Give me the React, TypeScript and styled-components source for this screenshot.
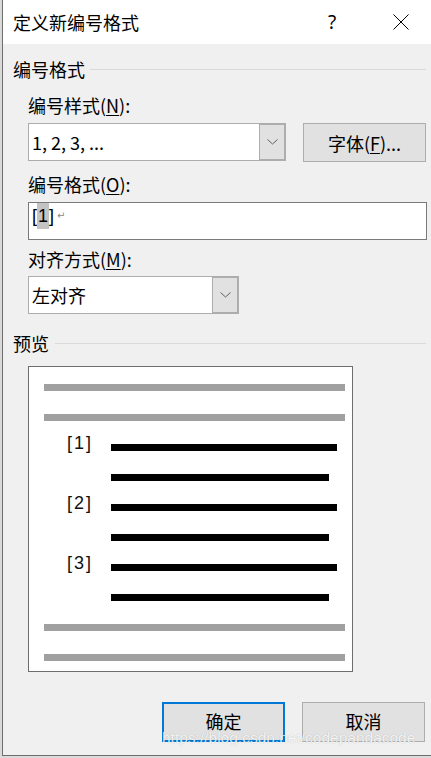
import React from 'react';
import styled, { createGlobalStyle } from 'styled-components';

const GlobalStyle = createGlobalStyle`
  html, body {
    margin: 0;
    padding: 0;
    background: #dadada;
  }
  * {
    box-sizing: border-box;
  }
`;

const Window = styled.div`
  position: relative;
  margin-left: 2px;
  width: 429px;
  height: 756px;
  display: flex;
  flex-direction: column;
  background: #f0f0f0;
  border-left: 1px solid #6e6e6e;
  border-bottom: 1px solid #6e6e6e;
  font-family: 'Noto Sans CJK SC', 'Noto Sans', sans-serif;
  font-size: 18px;
  color: #000;
`;

const TitleBar = styled.div`
  height: 44px;
  flex-shrink: 0;
  display: flex;
  align-items: center;
  background: #fff;
  padding-left: 10px;
`;

const Title = styled.div`
  flex: 1;
  line-height: 24px;
  font-size: 18px;
`;

const CaptionButton = styled.div<{ $gap?: number }>`
  width: 60px;
  height: 44px;
  display: flex;
  align-items: center;
  justify-content: center;
  margin-right: ${({ $gap }) => $gap ?? 0}px;
  font-size: 19px;
  font-family: 'Noto Sans', sans-serif;
`;

const Body = styled.div`
  flex: 1;
  display: flex;
  flex-direction: column;
  padding: 0 2px 0 10px;
`;

const GroupHeader = styled.div<{ $top: number; $lineGap: number }>`
  display: flex;
  align-items: center;
  height: 24px;
  margin-top: ${({ $top }) => $top}px;
  margin-right: 3px;
  line-height: 24px;

  &::after {
    content: '';
    flex: 1;
    height: 1px;
    margin-left: ${({ $lineGap }) => $lineGap}px;
    background: #d9d9d9;
  }
`;

const Indent = styled.div`
  display: flex;
  flex-direction: column;
  padding-left: 15px;
`;

const FieldLabel = styled.div<{ $top: number }>`
  margin-top: ${({ $top }) => $top}px;
  line-height: 24px;
  height: 24px;
`;

const Mnemonic = styled.span`
  text-decoration: underline;
  text-underline-offset: 2px;
`;

const Row = styled.div<{ $top: number }>`
  display: flex;
  align-items: flex-start;
  margin-top: ${({ $top }) => $top}px;
`;

const Combo = styled.div<{ $width: number; $top?: number }>`
  width: ${({ $width }) => $width}px;
  height: 38px;
  margin-top: ${({ $top }) => $top ?? 0}px;
  display: flex;
  background: #fff;
  border: 1px solid #adadad;
`;

const ComboValue = styled.div`
  flex: 1;
  display: flex;
  align-items: center;
  padding-left: 3px;
  font-size: 18px;
`;

const ComboArrow = styled.div`
  width: 26px;
  display: flex;
  align-items: center;
  justify-content: center;
  background: #e1e1e1;
  border-left: 1px solid #adadad;
  box-shadow: inset -1px -1px 0 #adadad, inset 0 1px 0 #adadad;
`;

const PushButton = styled.div<{ $focused?: boolean; $height?: number }>`
  width: 123px;
  height: ${({ $height }) => $height ?? 40}px;
  display: flex;
  align-items: center;
  justify-content: center;
  background: #e1e1e1;
  border: ${({ $focused }) => ($focused ? '2px solid #0078d7' : '1px solid #adadad')};
  font-size: 18px;
  line-height: 18px;
`;

const ButtonText = styled.span`
  margin-top: -3px;
`;

const FontButton = styled(PushButton)`
  margin-left: auto;
  margin-right: 3px;
`;

const TextBox = styled.div`
  margin-top: 6px;
  margin-right: 2px;
  height: 38px;
  background: #fff;
  border: 1px solid #7a7a7a;
  padding-left: 3px;
  display: flex;
  align-items: flex-start;
  font-family: 'Liberation Sans', Arial, sans-serif;
  font-size: 18px;
  line-height: 26px;
`;

const Selected = styled.span`
  background: #c3c3c3;
  padding: 0 1px;
`;

const ReturnMark = styled.span`
  margin-left: 3px;
  font-family: 'DejaVu Sans', sans-serif;
  font-size: 10px;
  color: #8a8a8a;
  line-height: 26px;
`;

const Preview = styled.div`
  margin-top: 11px;
  width: 325px;
  height: 306px;
  background: #fff;
  border: 1px solid #6d6d6d;
  padding: 17px 7px 10px 15px;
  display: flex;
  flex-direction: column;
  gap: 23px;
`;

const Bar = styled.div<{ $dark?: boolean; $width: number }>`
  height: 7px;
  width: ${({ $width }) => $width}px;
  background: ${({ $dark }) => ($dark ? '#000' : '#a0a0a0')};
`;

const ListRow = styled.div`
  display: flex;
  align-items: flex-start;
  height: 7px;
`;

const ListNumber = styled.div`
  width: 67px;
  padding-left: 23px;
  margin-top: -11px;
  height: 20px;
  line-height: 20px;
  font-family: 'Liberation Sans', Arial, sans-serif;
  font-size: 18px;
  letter-spacing: 2px;
  color: #111;
`;

const Footer = styled.div`
  display: flex;
  justify-content: flex-end;
  gap: 17px;
  margin-top: 30px;
  padding-right: 4px;
`;

const Watermark = styled.div`
  position: absolute;
  left: 159px;
  top: 732px;
  font-family: 'Liberation Sans', Arial, sans-serif;
  font-size: 15.5px;
  line-height: 12px;
  color: rgba(255, 255, 255, 0.85);
  text-shadow: 0 0 1px rgba(0, 0, 0, 0.25);
  white-space: nowrap;
  pointer-events: none;
`;

const Chevron = () => (
  <svg width="11" height="6" viewBox="0 0 11 6">
    <polyline points="0.5,0.5 5.5,5 10.5,0.5" fill="none" stroke="#606060" strokeWidth="1" />
  </svg>
);

const CloseIcon = () => (
  <svg width="16" height="16" viewBox="0 0 16 16">
    <line x1="0.5" y1="0.5" x2="15.5" y2="15.5" stroke="#000" strokeWidth="1" />
    <line x1="15.5" y1="0.5" x2="0.5" y2="15.5" stroke="#000" strokeWidth="1" />
  </svg>
);

const listItems = ['[1]', '[2]', '[3]'];

const App: React.FC = () => {
  return (
    <>
      <GlobalStyle />
      <Window>
        <TitleBar>
          <Title>定义新编号格式</Title>
          <CaptionButton $gap={9}>?</CaptionButton>
          <CaptionButton>
            <CloseIcon />
          </CaptionButton>
        </TitleBar>

        <Body>
          <GroupHeader $top={13} $lineGap={5}>编号格式</GroupHeader>
          <Indent>
            <FieldLabel $top={12}>
              编号样式(<Mnemonic>N</Mnemonic>):
            </FieldLabel>
            <Row $top={6}>
              <Combo $width={258}>
                <ComboValue>1, 2, 3, ...</ComboValue>
                <ComboArrow>
                  <Chevron />
                </ComboArrow>
              </Combo>
              <FontButton $height={39}>
                字体(<Mnemonic>F</Mnemonic>)...
              </FontButton>
            </Row>

            <FieldLabel $top={10}>
              编号格式(<Mnemonic>O</Mnemonic>):
            </FieldLabel>
            <TextBox>
              [<Selected>1</Selected>]<ReturnMark>↵</ReturnMark>
            </TextBox>

            <FieldLabel $top={7}>
              对齐方式(<Mnemonic>M</Mnemonic>):
            </FieldLabel>
            <Combo $width={211} $top={5}>
              <ComboValue>左对齐</ComboValue>
              <ComboArrow>
                <Chevron />
              </ComboArrow>
            </Combo>
          </Indent>

          <GroupHeader $top={17} $lineGap={6}>预览</GroupHeader>
          <Indent>
            <Preview>
              <Bar $width={301} />
              <Bar $width={301} />
              {listItems.map((label) => (
                <React.Fragment key={label}>
                  <ListRow>
                    <ListNumber>{label}</ListNumber>
                    <Bar $dark $width={226} />
                  </ListRow>
                  <ListRow>
                    <ListNumber />
                    <Bar $dark $width={218} />
                  </ListRow>
                </React.Fragment>
              ))}
              <Bar $width={301} />
              <Bar $width={301} />
            </Preview>
          </Indent>

          <Footer>
            <PushButton $focused>
              <ButtonText>确定</ButtonText>
            </PushButton>
            <PushButton>
              <ButtonText>取消</ButtonText>
            </PushButton>
          </Footer>
        </Body>

        <Watermark>https://blog.csdn.net/codepandacode</Watermark>
      </Window>
    </>
  );
};

export default App;
